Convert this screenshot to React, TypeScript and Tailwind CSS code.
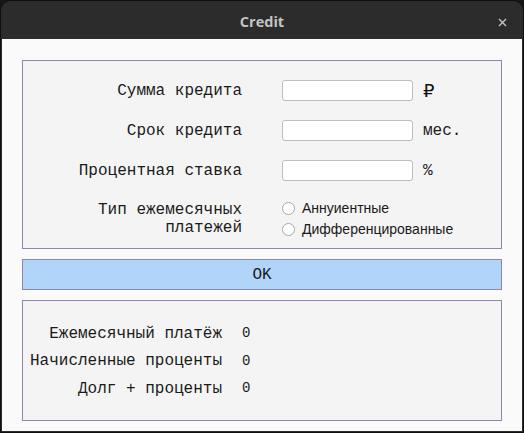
import React, { useState } from "react"

const mono = { fontFamily: '"Liberation Mono", "DejaVu Sans Mono", monospace' }

function Field({ label, suffix }: { label: string; suffix: string }) {
  const [value, setValue] = useState("")
  const rub = suffix === "₽"
  return (
    <div className="flex items-center h-[21px]">
      <div className="w-[219px] text-right text-[16px] text-[#1a1a1a] leading-[18px]" style={mono}>
        {label}
      </div>
      <input
        className="ml-[40px] w-[131px] h-[21px] bg-white border border-[#bdbdbd] rounded-[3px] outline-none px-1 text-[13px]"
        value={value}
        onChange={e => setValue(e.target.value)}
      />
      <span
        className={rub ? "ml-[10px] text-[18px] font-medium text-[#111]" : "ml-[10px] text-[16px] text-[#1a1a1a]"}
        style={rub ? { fontFamily: '"DejaVu Sans", sans-serif' } : mono}
      >
        {suffix}
      </span>
    </div>
  )
}

function Radio({ label }: { label: string }) {
  return (
    <label className="flex items-center h-[21px] gap-[7px] cursor-pointer">
      <span className="w-[13px] h-[13px] rounded-full border border-[#a8a8a8] bg-white" />
      <span className="text-[14px] text-[#1a1a1a]" style={{ fontFamily: '"Liberation Sans", Arial, sans-serif' }}>
        {label}
      </span>
    </label>
  )
}

function Result({ label, value }: { label: string; value: string }) {
  return (
    <div className="flex items-center h-[27.5px]">
      <div className="w-[199px] text-right text-[16px] text-[#1a1a1a]" style={mono}>{label}</div>
      <div className="ml-[20px] text-[14px] text-[#1a1a1a]" style={mono}>{value}</div>
    </div>
  )
}

export default function App() {
  return (
    <div className="w-[524px] h-[433px] bg-[#161616] overflow-hidden">
      <div className="w-[524px] h-[433px] flex flex-col rounded-t-[11px] bg-[#2c2c2c] border border-[#0f0f0f] overflow-hidden">
        {/* заголовок окна */}
        <div className="h-[38px] pt-[3px] flex items-center justify-center relative bg-[#2c2c2c]">
          <span
            className="text-[14.5px] font-bold text-[#c4c4c4]"
            style={{ fontFamily: '"Open Sans", "Noto Sans", sans-serif' }}
          >
            Credit
          </span>
          <svg className="absolute right-[16px] top-[17px]" width="9" height="9" viewBox="0 0 9 9">
            <path d="M1 1 L8 8 M8 1 L1 8" stroke="#c4c4c4" strokeWidth="1.4" />
          </svg>
        </div>

        <div className="flex-1 bg-[#fafafa] mx-[1px] mb-[1px] px-[20px] pt-[21px] pb-[10px] flex flex-col">
          <div className="h-[189px] bg-[#f4f4f4] border border-[#8c88aa] pt-[19px] flex flex-col gap-[19px]">
            <Field label="Сумма кредита" suffix="₽" />
            <Field label="Срок кредита" suffix="мес." />
            <Field label="Процентная ставка" suffix="%" />
            <div className="flex">
              <div className="w-[219px] text-right text-[16px] leading-[18px] text-[#1a1a1a] pt-[1px]" style={mono}>
                Тип ежемесячных
                <br />
                платежей
              </div>
              <div className="ml-[40px] -mt-[2px] flex flex-col">
                <Radio label="Аннуиентные" />
                <Radio label="Дифференцированные" />
              </div>
            </div>
          </div>

          <button
            className="mt-[10px] h-[31px] bg-[#b1d5f9] border border-[#8c88aa] text-[16px] text-[#1a1a1a] flex items-center justify-center"
            style={mono}
          >
            OK
          </button>

          <div className="mt-[10px] flex-1 bg-[#f4f4f4] border border-[#8c88aa] pt-[19px] flex flex-col">
            <Result label="Ежемесячный платёж" value="0" />
            <Result label="Начисленные проценты" value="0" />
            <Result label="Долг + проценты" value="0" />
          </div>
        </div>
      </div>
    </div>
  )
}
